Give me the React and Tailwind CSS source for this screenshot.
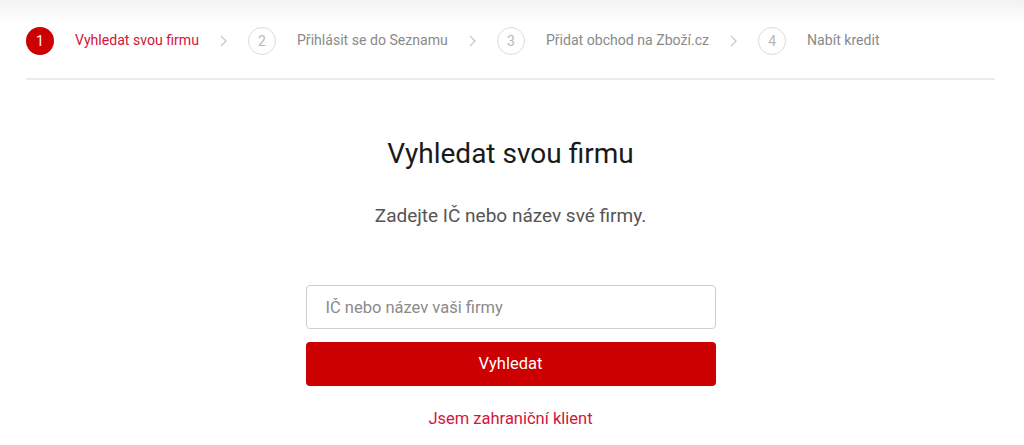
import React from "react";

function Chevron() {
  return (
    <svg width="9" height="14" viewBox="0 0 9 14" className="mx-[20px]">
      <path d="M2 2l5 5-5 5" fill="none" stroke="#c8c8c8" strokeWidth="1.3" />
    </svg>
  );
}

function Step({ n, label, active }) {
  return (
    <div className="flex items-center">
      <div
        className={
          active
            ? "w-[28px] h-[28px] rounded-full bg-[#cc0000] text-white flex items-center justify-center text-[14px]"
            : "w-[28px] h-[28px] rounded-full border border-[#dcdcdc] text-[#b8b8b8] flex items-center justify-center text-[14px]"
        }
      >
        {n}
      </div>
      <span
        className={
          active
            ? "ml-[21px] text-[14.1px] text-[#d3143c]"
            : "ml-[21px] text-[14.1px] text-[#8a8a8a]"
        }
      >
        {label}
      </span>
    </div>
  );
}

export default function App() {
  return (
    <div
      className="w-[1024px] h-[445px] bg-white overflow-hidden"
      style={{ fontFamily: "Roboto, 'Noto Sans', sans-serif" }}
    >
      <div className="h-[22px] bg-gradient-to-b from-[#f2f2f2] to-white" />
      <div className="ml-[26px] w-[969px]">
        <div className="flex items-center h-[38px]">
          <Step n="1" label="Vyhledat svou firmu" active />
          <Chevron />
          <Step n="2" label="Přihlásit se do Seznamu" />
          <Chevron />
          <Step n="3" label="Přidat obchod na Zboží.cz" />
          <Chevron />
          <Step n="4" label="Nabít kredit" />
        </div>
        <div className="mt-[18px] h-[2px] bg-[#ececec]" />
        <div className="flex flex-col items-center">
          <h1 className="mt-[56px] text-[28px] leading-[36px] text-[#1a1a1a]">
            Vyhledat svou firmu
          </h1>
          <p className="mt-[31px] text-[19px] leading-[26px] text-[#555]">
            Zadejte IČ nebo název své firmy.
          </p>
          <input
            className="mt-[56px] w-[410px] h-[44px] rounded-[4px] border border-[#cfcfcf] px-[19px] text-[16.5px] placeholder:text-[#8a8a8a] outline-none"
            placeholder="IČ nebo název vaši firmy"
          />
          <button className="mt-[13px] w-[410px] h-[44px] rounded-[4px] bg-[#cc0000] text-white text-[16.5px]">
            Vyhledat
          </button>
          <a className="mt-[21px] text-[16.5px] leading-[24px] text-[#d3143c]">
            Jsem zahraniční klient
          </a>
        </div>
      </div>
    </div>
  );
}
